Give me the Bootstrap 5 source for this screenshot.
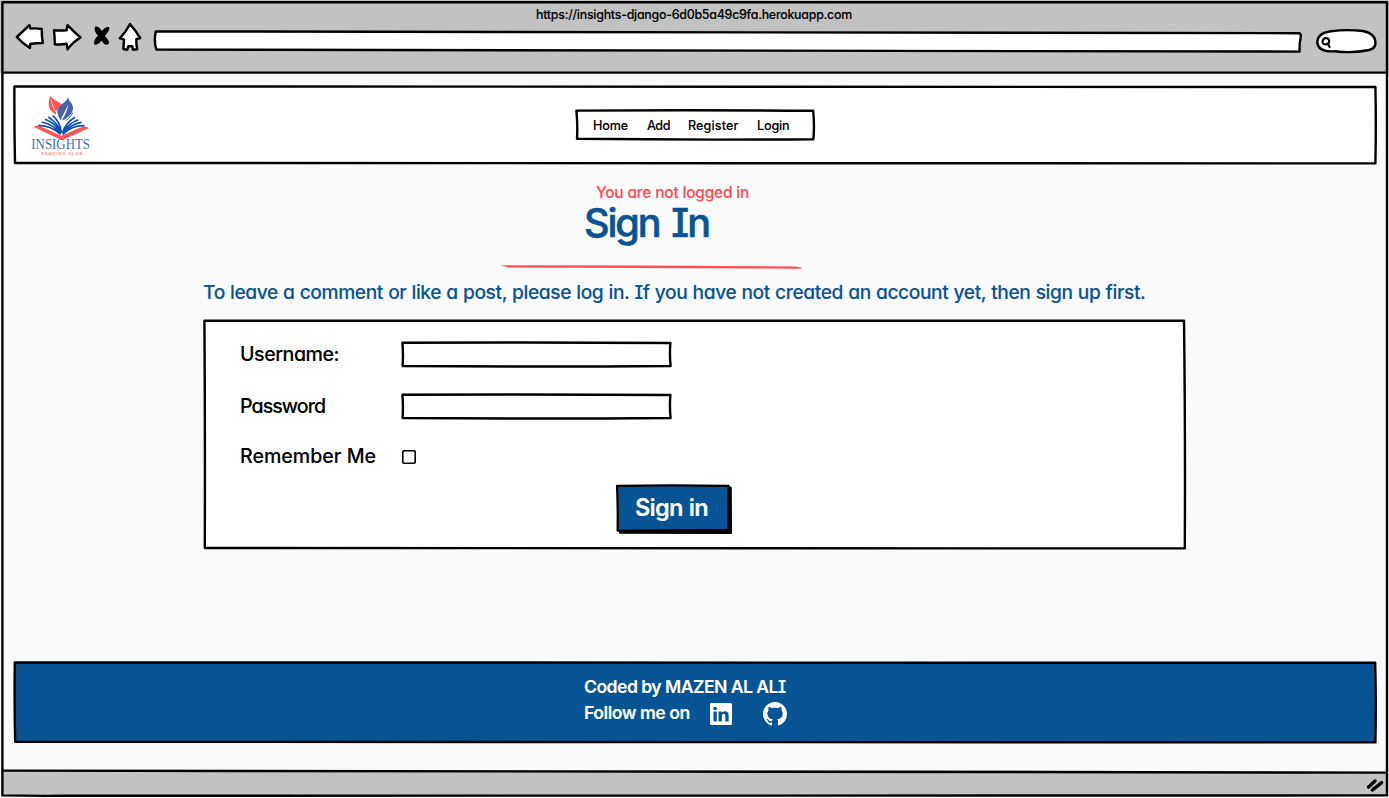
<!DOCTYPE html>
<html lang="en">
<head>
<meta charset="utf-8">
<meta name="viewport" content="width=device-width, initial-scale=1">
<title>Insights - Sign In</title>
<link href="https://cdn.jsdelivr.net/npm/bootstrap@5.3.0/dist/css/bootstrap.min.css" rel="stylesheet">
<style>
  body { font-family: Inter, "Liberation Sans", sans-serif; font-feature-settings: "cv11", "cv08"; font-weight: 500; color: #000; background: #fafafa; height: 798px; overflow: hidden; -webkit-text-stroke: .1px currentColor; }
  .brand-blue { color: #085394; }
  .brand-red { color: #ff4b55; }
  .ink { overflow: visible; fill: none; stroke: #000; stroke-width: 2.4; stroke-linejoin: round; stroke-linecap: round; }
  .frame-ink { position: absolute; inset: 0; width: 100%; height: 100%; pointer-events: none; }
  .chrome-top { height: 73px; background: #c2c2c2; }
  .chrome-title { font-size: 12.4px; line-height: 29px; padding-left: 536px; letter-spacing: -.245px; }
  .toolbar svg { height: 44px; flex: none; }
  .site-nav { margin: 13px 13px 0 14px; height: 77px; }
  .logo { margin: 2px 0 0 6px; width: 80px; height: 76px; flex: none; -webkit-text-stroke: 0; }
  .menu-box { width: 239px; height: 30px; margin: 24px 0 0 476px; font-size: 12.6px; line-height: 31px; }
  .menu-box .nav { padding-left: 17px; }
  .status-note { margin: 20px 0 0 596px; font-size: 15.4px; line-height: 20px; letter-spacing: -.15px; }
  .page-title { margin: -2px 0 0 584px; font-size: 39.6px; line-height: 44px; letter-spacing: -2.1px; word-spacing: 3.4px; font-weight: 500; -webkit-text-stroke: .6px currentColor; }
  .title-rule { margin: 19px 0 0 500px; }
  .lead-line { margin: 9px 0 0 203px; font-size: 19.2px; line-height: 26px; letter-spacing: -.4px; word-spacing: .45px; white-space: nowrap; }
  .form-sheet { width: 981px; height: 228px; margin: 15px 0 0 204px; padding-top: 21px; font-size: 19.6px; }
  .form-line { height: 26px; line-height: 26px; padding-left: 36px; }
  .form-line label { width: 162px; }
  .field { width: 269px; height: 25px; }
  .field input { width: 100%; height: 100%; padding: 0 6px; border: 0; background: transparent; outline: 0; }
  .tick { appearance: none; position: relative; top: .5px; width: 14px; height: 14px; border: 0; box-shadow: inset 0 0 0 1.6px #000; border-radius: 2px; margin: 0; outline: 0; }
  .submit { width: 113px; height: 46px; margin: 16px 0 0 413px; border: 0; padding: 0 4px 0 0; color: #fff; background: transparent; font-size: 23.6px; font-weight: 600; line-height: 46px; letter-spacing: -.76px; word-spacing: 1px; }
  .site-foot { margin: 0 13px 0 14px; height: 81px; padding: 12px 0 0 570px; color: #fff; font-size: 17.6px; line-height: 26px; font-weight: 600; letter-spacing: -.54px; }
  .chrome-bottom { height: 28px; margin-top: 27px; flex: none; }
</style>
</head>
<body class="position-relative d-flex flex-column">
  <header class="chrome-top">
    <div class="chrome-title">https://insights-django-6d0b5a49c9fa.herokuapp.com</div>
    <div class="toolbar d-flex">
      <svg class="ink" width="48" viewBox="0 29 48 44"><path fill="#fff" d="M16.8 37 29.5 25.2 30.4 28.6Q36 28 41.8 29 41.6 36 42.8 43 36 43 30.2 44L30 48Q22 43 16.8 37Z"/></svg>
      <svg class="ink" width="40" viewBox="48 29 40 44"><path fill="#fff" d="M54 30.3Q60 30.8 66.6 30.2L67.5 25.2Q74 32 80.5 37.5 73 42 67.5 49.2L66.7 43.8Q60 45 54.8 44.2 54.8 37 54 30.3Z"/></svg>
      <svg class="ink" width="26" viewBox="88 29 26 44"><path fill="#000" stroke-width="1.4" d="M95.6 27.2Q99.4 27 101.8 32.6 104.6 27.6 108.6 27.6 109.6 29.6 104 36 109.4 41.6 108 43.6 104.6 45.4 101.6 39.2 98.4 44.4 95 44 93.4 41.4 99 35.6 94 30.4 95.6 27.2Z"/></svg>
      <svg class="ink" width="36" viewBox="114 29 36 44"><path fill="#fff" d="M130 24Q136 31 140.3 38.2L136.4 39.2Q136 44 137.2 49.2L133 49.8 132.2 46.2 128.2 46.2 127.3 49.8 123.4 49.1 124 39.3 119.8 38.3Q126 32 130 24Z"/></svg>
      <svg class="ink" width="1158" viewBox="150 29 1158 44"><path fill="#fff" d="M155.8 31.4Q700 32 1299 33.2 1301.4 33.4 1300.6 38 1299.2 45 1299.6 51.6 700 51 156.4 49.6 153.6 41 155.8 31.4Z"/></svg>
      <svg class="ink" width="78" viewBox="1308 29 78 44"><path fill="#fff" d="M1331 31.2Q1346 29.2 1363 31 1375 33.5 1375.3 42 1376.5 48 1369 50 1352 53.6 1335 51.2 1319 52.5 1317.3 43 1317 33 1331 31.2Z"/><path stroke-width="2.2" d="M1325.8 38.2C1329 38 1330 41 1328.4 43.4 1326.4 45 1323.2 44.8 1322.6 42.4 1322.2 40 1323.6 38.4 1325.8 38.2ZM1328 44 1329.6 47"/></svg>
    </div>
  </header>

  <nav class="site-nav position-relative bg-white d-flex">
    <svg class="ink frame-ink" viewBox="14 86 1362 77" preserveAspectRatio="none"><path d="M14.4 86.4Q500 86 1375.4 87 1376.2 125 1375.4 163.4 700 162.8 15 163 14.2 125 14.4 86.4Z"/></svg>
    <svg class="logo position-relative" viewBox="0 0 240 228">
      <path fill="#fb5558" d="M91 23C85 38 84 52 90 64 95 72 102 76 108 80 107 68 114 58 125 52 120 38 98 38 91 23Z"/>
      <path fill="#4863a8" d="M144 28C136 50 108 50 113 78 115 88 120 90 122 98 129 76 140 64 143 50 144 68 132 84 125 98 142 92 159 78 159 60 158 44 148 44 144 28Z"/>
      <path fill="none" stroke="#fff" stroke-width="2" d="M93 35Q97 56 107 72"/>
      <path fill="none" stroke="#4863a8" stroke-width="3" d="M158 74Q150 94 125 105"/>
      <path fill="#fb5558" d="M40 116 54 112 124 142 192 114 207 120 126 157Z"/>
      <path fill="#fff" d="M55 112 124 143 192 113 150 98 100 96Z"/>
      <path fill="none" stroke="#0c4fae" stroke-width="5" d="M56 112Q94 113 122 139M65 102Q98 108 122 137M75 94Q104 104 122 135M85 87Q112 104 123 134M98 83Q120 102 124 133M193 113Q156 112 128 139M185 103Q152 108 128 137M175 95Q146 105 128 135M165 88Q138 104 127 134"/>
      <text x="34" y="182" textLength="176" lengthAdjust="spacingAndGlyphs" font-family="Liberation Serif, serif" font-weight="400" font-size="41" fill="#3f6fb5">INSIGHTS</text>
      <text x="64" y="201" textLength="122" font-family="Liberation Sans, sans-serif" font-weight="700" font-size="10.5" fill="#f4797c">READING CLUB</text>
    </svg>
    <div class="menu-box position-relative">
      <svg class="ink frame-ink" viewBox="576 110 239 30" preserveAspectRatio="none"><path d="M576.4 110.6Q700 109.8 813.2 110.8 814.6 125 813.4 139.2 700 140.2 577 138.8 577.8 125 576.4 110.6Z"/></svg>
      <ul class="nav position-relative flex-nowrap">
        <li style="width:54px;letter-spacing:-.14px">Home</li>
        <li style="width:41px;letter-spacing:-.47px">Add</li>
        <li style="width:69px;letter-spacing:.1px">Register</li>
        <li style="letter-spacing:-.15px">Login</li>
      </ul>
    </div>
  </nav>

  <main class="flex-grow-1">
    <div class="status-note brand-red">You are not logged in</div>
    <h1 class="page-title brand-blue mb-0">Sign In</h1>
    <svg class="title-rule d-block" width="303" height="6" viewBox="500 264 303 6"><path fill="#ff4b55" d="M501 265.2Q650 265.4 796 266.4L802 268 801 268.7Q650 268 508 267.6Z"/></svg>
    <p class="lead-line brand-blue mb-0">To leave a comment or like a post, please log in. If you have not created an account yet, then sign up first.</p>
    <form class="form-sheet position-relative bg-white">
      <svg class="ink frame-ink" viewBox="204 320 981 228" preserveAspectRatio="none"><path d="M204.4 320.8Q700 319.8 1184 320.8 1185.4 430 1184.8 548.4 700 547.6 204.8 548 205.2 430 204.4 320.8Z"/></svg>
      <div class="form-line position-relative d-flex align-items-center" style="margin-bottom:26px">
        <label style="letter-spacing:-.46px" for="user">Username:</label>
        <div class="field position-relative"><svg class="ink frame-ink" viewBox="0 0 269 25" preserveAspectRatio="none"><path d="M.4 .8Q135 0 268.4 1 267.4 12 268.6 24 135 25 .6 24 1.4 12 .4 .8Z"/></svg><input type="text" id="user" class="position-relative"></div>
      </div>
      <div class="form-line position-relative d-flex align-items-center" style="margin-bottom:24px">
        <label style="letter-spacing:-.96px" for="pass">Password</label>
        <div class="field position-relative"><svg class="ink frame-ink" viewBox="0 0 269 25" preserveAspectRatio="none"><path d="M.4 .8Q135 0 268.4 1 267.4 12 268.6 24 135 25 .6 24 1.4 12 .4 .8Z"/></svg><input type="password" id="pass" class="position-relative"></div>
      </div>
      <div class="form-line position-relative d-flex align-items-center">
        <label for="keep">Remember Me</label>
        <input type="checkbox" id="keep" class="tick">
      </div>
      <button type="button" class="submit position-relative d-block">
        <svg class="ink frame-ink" viewBox="617 485 113 46" preserveAspectRatio="none"><path fill="#000" d="M620 487.8 730.6 487.6 730.8 532.8 620 532.6Z"/><path fill="#085394" stroke-width="2.2" d="M617 485.8Q670 485 728.6 485.8L728.4 529.8Q670 530.4 617.6 530.6 618 508 617 485.8Z"/></svg>
        <span class="position-relative">Sign in</span>
      </button>
    </form>
  </main>

  <footer class="site-foot position-relative">
    <svg class="ink frame-ink" viewBox="14 662 1362 81" preserveAspectRatio="none"><path fill="#085394" d="M14.8 662.4Q700 661.6 1375.2 662.8 1376.2 702 1375.4 742.4 700 742.8 15.2 741.8 14.2 702 14.8 662.4Z"/></svg>
    <div class="position-relative">Coded by MAZEN AL ALI</div>
    <div class="position-relative d-flex">
      <span style="width:126px;letter-spacing:-.48px">Follow me on</span>
      <svg width="22" height="22" viewBox="0 0 16 16" fill="#fff" style="margin-top:3px"><path d="M0 1.146C0 .513.526 0 1.175 0h13.65C15.474 0 16 .513 16 1.146v13.708c0 .633-.526 1.146-1.175 1.146H1.175C.526 16 0 15.487 0 14.854V1.146zm4.943 12.248V6.169H2.542v7.225h2.401zm-1.2-8.212c.837 0 1.358-.554 1.358-1.248-.015-.709-.52-1.248-1.342-1.248-.822 0-1.359.54-1.359 1.248 0 .694.521 1.248 1.327 1.248h.016zm4.908 8.212V9.359c0-.216.016-.432.08-.586.173-.431.568-.878 1.232-.878.869 0 1.216.662 1.216 1.634v3.865h2.401V9.25c0-2.22-1.184-3.252-2.764-3.252-1.274 0-1.845.7-2.165 1.193v.025h-.016a5.54 5.54 0 0 1 .016-.025V6.169h-2.4c.03.678 0 7.225 0 7.225h2.4z"/></svg>
      <svg width="24" height="24" viewBox="0 0 16 16" fill="#fff" style="margin:2px 0 0 31px"><path d="M8 0C3.58 0 0 3.58 0 8c0 3.54 2.29 6.53 5.47 7.59.4.07.55-.17.55-.38 0-.19-.01-.82-.01-1.49-2.01.37-2.53-.49-2.69-.94-.09-.23-.48-.94-.82-1.13-.28-.15-.68-.52-.01-.53.63-.01 1.08.58 1.23.82.72 1.21 1.87.87 2.33.66.07-.52.28-.87.51-1.07-1.78-.2-3.64-.89-3.64-3.95 0-.87.31-1.59.82-2.15-.08-.2-.36-1.02.08-2.12 0 0 .67-.21 2.2.82.64-.18 1.32-.27 2-.27.68 0 1.36.09 2 .27 1.53-1.04 2.2-.82 2.2-.82.44 1.1.16 1.92.08 2.12.51.56.82 1.27.82 2.15 0 3.07-1.87 3.75-3.65 3.95.29.25.54.73.54 1.48 0 1.07-.01 1.93-.01 2.2 0 .21.15.46.55.38A8.012 8.012 0 0 0 16 8c0-4.42-3.58-8-8-8z"/></svg>
    </div>
  </footer>
  <div class="chrome-bottom"><svg class="ink d-block" width="1389" height="28" viewBox="0 770 1389 28"><path fill="#c2c2c2" stroke="none" d="M3 770.4Q1200 769 1387 772.6V795H3Z"/><path d="M3 770.6Q1200 769.4 1387 772.6"/><path stroke-width="3.4" d="M1368.6 787 1375 781M1372.4 790 1381.6 782.6"/></svg></div>
  <svg class="ink frame-ink" viewBox="0 0 1389 798"><path d="M2.4 2.2H1387V795.4Q700 794.6 60 795.8 30 796 2.4 795.4ZM3 72.6H1386"/></svg>
<script src="https://cdn.jsdelivr.net/npm/bootstrap@5.3.0/dist/js/bootstrap.bundle.min.js"></script>
</body>
</html>
